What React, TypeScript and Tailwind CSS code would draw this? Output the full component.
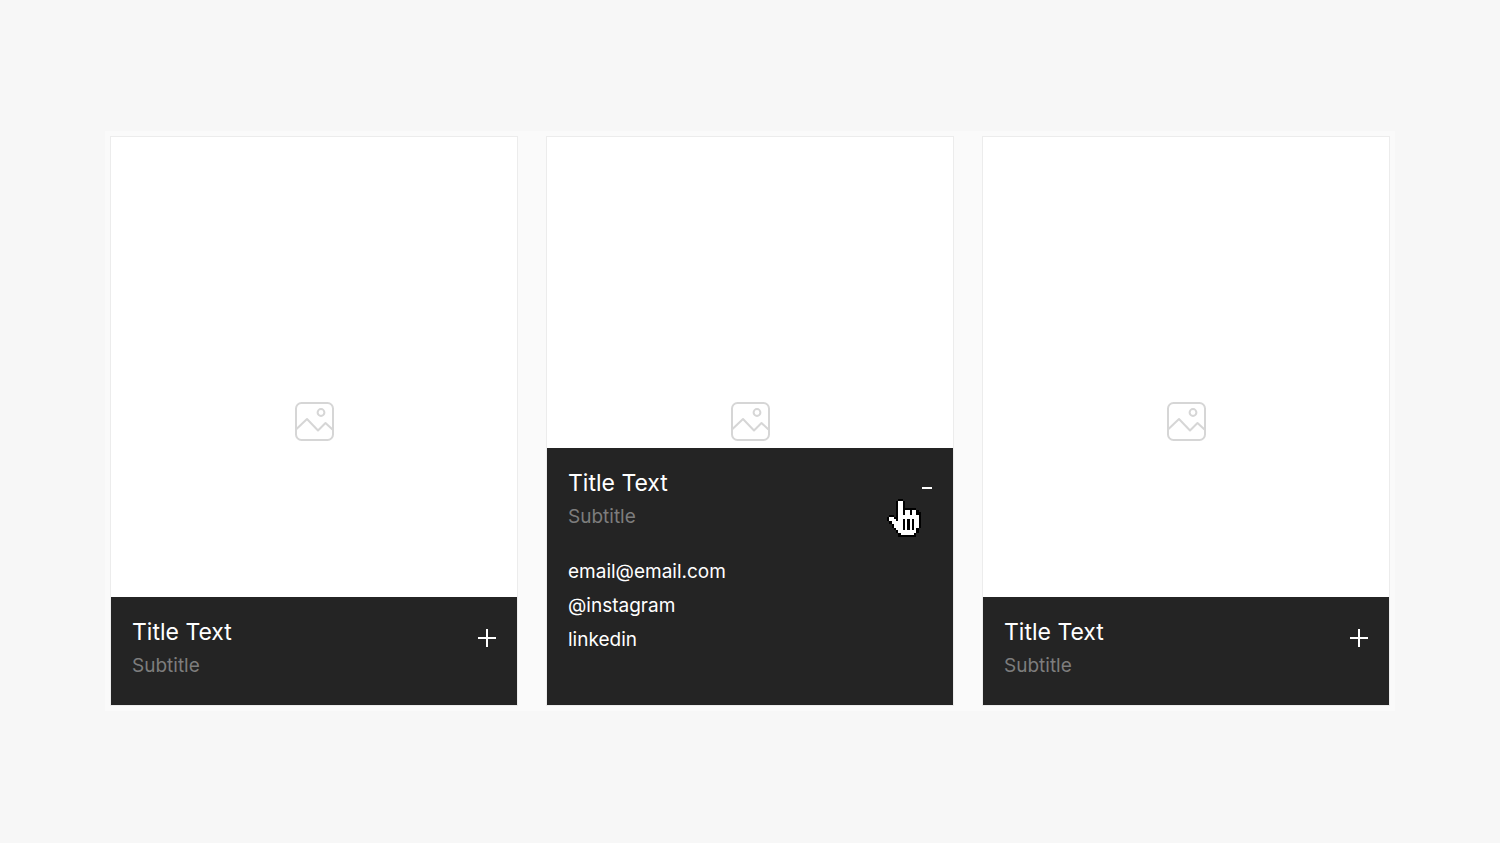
import { useState } from "react";

type Card = {
  title: string;
  subtitle: string;
  links: { label: string; href: string }[];
};

const links = [
  { label: "email@email.com", href: "mailto:email@email.com" },
  { label: "@instagram", href: "#instagram" },
  { label: "linkedin", href: "#linkedin" },
];

const cards: Card[] = [
  { title: "Title Text", subtitle: "Subtitle", links },
  { title: "Title Text", subtitle: "Subtitle", links },
  { title: "Title Text", subtitle: "Subtitle", links },
];

// X = outline, # = fill
const hand = [
  ".....XX........",
  "....X##X.......",
  "....X##X.......",
  "....X##X.......",
  "....X##XXXXXX..",
  "....X##X##X##X.",
  "....X##X##X##XX",
  ".XX.X#########X",
  "X##XX#########X",
  "X###X##X#X#X##X",
  ".X#####X#X#X##X",
  "..X####X#X#X##X",
  "..X####X#X#X##X",
  "...X###X#X#X#X.",
  "....X########X.",
  ".....X######X..",
  ".....XXXXXXXX..",
];

const HandCursor = () => (
  <svg
    viewBox="0 0 15 17"
    aria-hidden="true"
    className="pointer-events-none absolute top-[51px] right-8 h-[38px] w-[34px]"
  >
    {hand.flatMap((row, y) =>
      row.split("").map((cell, x) =>
        cell === "." ? null : (
          <rect
            key={`${x}-${y}`}
            x={x}
            y={y}
            width="1"
            height="1"
            shapeRendering="crispEdges"
            fill={cell === "X" ? "#000" : "#fff"}
          />
        )
      )
    )}
  </svg>
);

const ImageIcon = () => (
  <svg viewBox="0 0 40 40" fill="none" stroke="#d6d6d6" strokeWidth="2" aria-hidden="true" className="size-10">
    <rect x="2" y="2" width="37" height="37" rx="5.5" />
    <circle cx="27" cy="11.5" r="3.4" />
    <path d="M2.5 28 13 18 24 29.5 31.5 22 38.5 28.5" strokeLinejoin="round" />
  </svg>
);

const ProfileCard = ({ card, defaultOpen = false }: { card: Card; defaultOpen?: boolean }) => {
  const [open, setOpen] = useState(defaultOpen);

  return (
    <article className="relative flex aspect-[408/570] flex-1 items-center justify-center border border-[#ececec] bg-white">
      <ImageIcon />

      {/* Details panel slides over the image */}
      <div className={`absolute inset-x-0 bottom-0 bg-[#242424] px-[21px] pt-[18px] ${open ? "pb-12" : "pb-[23px]"}`}>
        <div className="flex items-start justify-between">
          <div>
            <h2 className="text-[23px] leading-[34px] text-white">{card.title}</h2>
            <p className="text-[19px] leading-[33px] text-[#7d7d7d]">{card.subtitle}</p>
          </div>
          <button
            type="button"
            aria-expanded={open}
            aria-label={open ? "Hide contact details" : "Show contact details"}
            onClick={() => setOpen(!open)}
            className="mt-[14px]"
          >
            <svg viewBox="0 0 18 18" stroke="#fff" strokeWidth="2" className="size-[18px]">
              {open ? <path d="M8 8h10" /> : <path d="M0 9h18M9 0v18" />}
            </svg>
          </button>
        </div>

        {open && (
          <ul className="mt-[22px] text-[19px] leading-[34px] text-white">
            {card.links.map((link) => (
              <li key={link.label}>
                <a href={link.href}>{link.label}</a>
              </li>
            ))}
          </ul>
        )}
        {open && <HandCursor />}
      </div>
    </article>
  );
};

const App = () => {
  return (
    <main className="flex min-h-screen items-center bg-[#f7f7f7] px-[7%] pb-px font-['Inter',sans-serif]">
      <section className="flex flex-1 gap-7 bg-[#fafafa] p-[5px]">
        {cards.map((card, i) => (
          <ProfileCard key={i} card={card} defaultOpen={i === 1} />
        ))}
      </section>
    </main>
  );
};

export default App;
